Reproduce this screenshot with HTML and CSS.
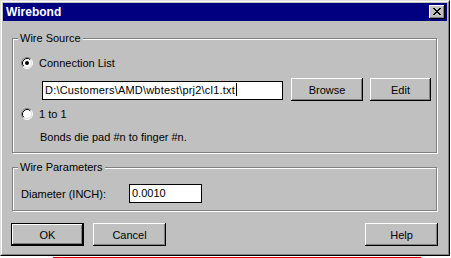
FILE: index.html
```html
<!DOCTYPE html>
<html>
<head>
<meta charset="utf-8">
<link rel="stylesheet" href="styles.css">
</head>
<body>
<div class="window">
  <div class="frame">
    <div class="titlebar">
      <span class="title">Wirebond</span>
      <button class="close"><svg width="8" height="7" viewBox="0 0 8 7" shape-rendering="crispEdges"><path fill="#000" d="M0 0h2v1H0zM6 0h2v1H6zM1 1h2v1H1zM5 1h2v1H5zM2 2h4v1H2zM3 3h2v1H3zM2 4h4v1H2zM1 5h2v1H1zM5 5h2v1H5zM0 6h2v1H0zM6 6h2v1H6z"/></svg></button>
    </div>
    <div class="client">
      <div class="group g1">
        <span class="legend">Wire Source</span>
        <div class="row r1">
          <span class="radio"><svg width="12" height="12" viewBox="0 0 12 12"><circle cx="6" cy="6" r="5" fill="#fff"/><path d="M2.11 9.89A5.5 5.5 0 0 1 9.89 2.11" fill="none" stroke="#808080"/><path d="M2.11 9.89A5.5 5.5 0 0 0 9.89 2.11" fill="none" stroke="#fff"/><path d="M2.82 9.18A4.5 4.5 0 0 1 9.18 2.82" fill="none" stroke="#000"/><path d="M2.82 9.18A4.5 4.5 0 0 0 9.18 2.82" fill="none" stroke="#dfdfdf"/><circle cx="6" cy="6" r="2" fill="#000"/></svg></span>
          <span>Connection List</span>
        </div>
        <div class="row r2">
          <div class="input path">D:\Customers\AMD\wbtest\prj2\cl1.txt<span class="caret"></span></div>
          <button class="btn browse">Browse</button>
          <button class="btn edit">Edit</button>
        </div>
        <div class="row r3">
          <span class="radio"><svg width="12" height="12" viewBox="0 0 12 12"><circle cx="6" cy="6" r="5" fill="#fff"/><path d="M2.11 9.89A5.5 5.5 0 0 1 9.89 2.11" fill="none" stroke="#808080"/><path d="M2.11 9.89A5.5 5.5 0 0 0 9.89 2.11" fill="none" stroke="#fff"/><path d="M2.82 9.18A4.5 4.5 0 0 1 9.18 2.82" fill="none" stroke="#000"/><path d="M2.82 9.18A4.5 4.5 0 0 0 9.18 2.82" fill="none" stroke="#dfdfdf"/></svg></span>
          <span>1 to 1</span>
        </div>
        <div class="row r4">Bonds die pad #n to finger #n.</div>
      </div>
      <div class="group g2">
        <span class="legend">Wire Parameters</span>
        <div class="row r5">
          <span class="label">Diameter (INCH):</span>
          <div class="input dia">0.0010</div>
        </div>
      </div>
      <div class="buttons">
        <button class="btn default">OK</button>
        <button class="btn cancel">Cancel</button>
        <button class="btn help">Help</button>
      </div>
    </div>
  </div>
</div>
<div class="redline"></div>
</body>
</html>
```
FILE: styles.css
```css
body {
  margin: 0;
  background: #fff;
  font-family: "Liberation Sans", Arial, sans-serif;
  font-size: 11px;
  color: #000;
}
.window {
  width: 450px;
  height: 256px;
  box-sizing: border-box;
  border: 1px solid;
  border-color: #dfdfdf #000 #000 #dfdfdf;
  background: #c0c0c0;
}
.frame {
  height: 100%;
  box-sizing: border-box;
  border: 1px solid;
  border-color: #fff #808080 #808080 #fff;
  padding: 1px;
  display: flex;
  flex-direction: column;
}
.titlebar {
  height: 18px;
  flex: none;
  background: #000080;
  display: flex;
  align-items: center;
  padding: 0 2px 0 3px;
  color: #fff;
  font-weight: bold;
  font-size: 12px;
}
.close {
  margin-left: auto;
  width: 16px;
  height: 14px;
  box-sizing: border-box;
  padding: 0;
  border: none;
  background: #c0c0c0;
  box-shadow: inset -1px -1px #000, inset 1px 1px #fff, inset -2px -2px #808080;
  display: flex;
  align-items: center;
  justify-content: center;
}
.close svg { display: block; margin-top: -1px; }
.client {
  flex: 1;
  padding-left: 9px;
}
.group {
  position: relative;
  box-sizing: border-box;
  width: 425px;
  border: 1px solid #808080;
  box-shadow: inset 1px 1px #fff, 1px 1px #fff;
}
.g1 { margin-top: 17px; height: 115px; }
.g2 { margin-top: 14px; height: 44px; }
.legend {
  position: absolute;
  left: 5px;
  top: -8px;
  padding: 0 2px;
  background: #c0c0c0;
  line-height: 14px;
}
.row {
  display: flex;
  align-items: center;
  height: 14px;
  line-height: 14px;
  white-space: nowrap;
}
.radio { width: 12px; height: 12px; display: block; }
.radio svg { display: block; }
.r1 { margin-top: 17px; padding-left: 8px; gap: 6px; }
.r2 { margin-top: 8px; height: 23px; align-items: flex-start; padding-left: 29px; }
.r3 { margin-top: 6px; padding-left: 8px; gap: 6px; }
.r4 { margin-top: 9px; padding-left: 27px; }
.r5 { margin-top: 16px; height: 19px; padding-left: 8px; }
.label { width: 108px; }
.input {
  box-sizing: border-box;
  height: 19px;
  border: 1px solid #000;
  background: #fff;
  padding-left: 2px;
  line-height: 17px;
  white-space: nowrap;
  overflow: hidden;
}
.path { width: 241px; margin-top: 3px; letter-spacing: 0.2px; }
.caret {
  display: inline-block;
  width: 1px;
  height: 13px;
  background: #000;
  vertical-align: -2px;
  margin-left: 1px;
}
.dia { width: 73px; }
.btn {
  box-sizing: border-box;
  height: 23px;
  padding: 0;
  border: none;
  background: #c0c0c0;
  font: inherit;
  color: #000;
  box-shadow: inset -1px -1px #000, inset 1px 1px #fff, inset -2px -2px #808080;
}
.browse { width: 72px; margin-left: 8px; }
.edit { width: 61px; margin-left: 7px; }
.buttons {
  display: flex;
  width: 427px;
  margin: 12px 0 0 -1px;
}
.default {
  width: 73px;
  box-shadow: inset 0 0 0 1px #000, inset -2px -2px #000, inset 2px 2px #fff, inset -3px -3px #808080;
}
.cancel { width: 73px; margin-left: 9px; }
.help { width: 73px; margin-left: auto; }
.redline {
  width: 368px;
  height: 1px;
  margin: 1px 0 0 53px;
  background: #e00000;
}
```
